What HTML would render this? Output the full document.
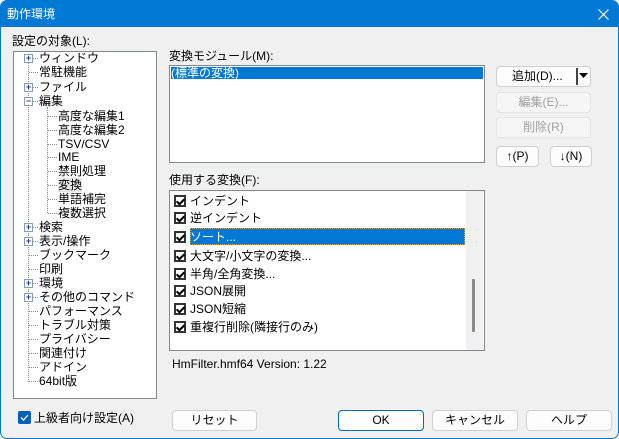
<!DOCTYPE html>
<html><head><meta charset="utf-8"><style>
*{box-sizing:border-box;margin:0;padding:0}
body{width:619px;height:439px;overflow:hidden;background:#fff;font-family:"Liberation Sans","Noto Sans CJK JP",sans-serif;font-size:12px;color:#000}
.win{position:absolute;left:0;top:0;width:619px;height:439px;background:#f0f0f0;border:1px solid #0078d4;border-radius:7px 7px 7px 7px;overflow:hidden}
.title{position:absolute;left:0;top:0;width:619px;height:26px;background:#0078d4;color:#fff;font-size:12px;line-height:26px;padding-left:6px}
.a{position:absolute;white-space:nowrap;line-height:14px}
.box{position:absolute;background:#fff;border:1px solid #828790}
.btn{position:absolute;background:#fdfdfd;border:1px solid #d0d0d0;border-radius:4px;text-align:center;line-height:18px;font-size:12px}
.dis{color:#a0a0a0;background:#f5f5f5;border-color:#e5e5e5}
.pm{position:absolute;width:9px;height:9px;border:1px solid #8a9ab0;background:#fff;font-size:9px;line-height:7px;text-align:center;color:#2040a0;font-weight:bold}
.vd{position:absolute;border-left:1px dotted #888;width:0}
.hd{position:absolute;border-top:1px dotted #888;height:0}
.cb{position:absolute;width:12px;height:12px;border:2px solid #333;background:#fff}
.cb::after{content:"";position:absolute;left:2px;top:0px;width:3px;height:6px;border:solid #000;border-width:0 2px 2px 0;transform:rotate(45deg)}
</style></head><body>
<div class="win">
<div class="title">動作環境</div>
<svg style="position:absolute;left:597px;top:8px" width="11" height="11"><path d="M0.5 0.5L10.5 10.5M10.5 0.5L0.5 10.5" stroke="#fff" stroke-width="1.2"/></svg>

<div class="a" style="left:11px;top:33px">設定の対象(L):</div>
<div class="box" style="left:12px;top:50px;width:144px;height:348px">
</div>
<div class="vd" style="left:27px;top:58px;height:323px"></div>
<div class="vd" style="left:46px;top:106px;height:106px"></div>
<div id="tree"></div>

<div class="a" style="left:168px;top:48px">変換モジュール(M):</div>
<div class="box" style="left:168px;top:64px;width:316px;height:98px"></div>
<div class="a" style="left:170px;top:66px;width:312px;height:12px;background:#0078d4;color:#fff;line-height:12px">(標準の変換)</div>

<div class="btn" style="left:495px;top:65px;width:95px;height:21px;text-align:left;padding-left:15px">追加(D)...</div>
<div style="position:absolute;left:575px;top:67px;width:2px;height:17px;background:#444"></div>
<svg style="position:absolute;left:578px;top:72px" width="9" height="6"><path d="M0 0H9L4.5 5Z" fill="#000"/></svg>
<div class="btn dis" style="left:495px;top:91px;width:95px;height:21px">編集(E)...</div>
<div class="btn dis" style="left:495px;top:116px;width:95px;height:21px">削除(R)</div>
<div class="btn" style="left:495px;top:145px;width:43px;height:21px">↑(P)</div>
<div class="btn" style="left:549px;top:145px;width:42px;height:21px">↓(N)</div>

<div class="a" style="left:168px;top:172px">使用する変換(F):</div>
<div class="box" style="left:168px;top:189px;width:316px;height:161px"></div>
<div style="position:absolute;left:465px;top:190px;width:17px;height:159px;background:#f0f0f0"></div>
<div style="position:absolute;left:471px;top:278px;width:3px;height:53px;background:#8a8a8a;border-radius:1px"></div>
<div style="position:absolute;left:189px;top:227px;width:275px;height:17px;background:#0078d4;outline:1px dotted #f0a040;outline-offset:-1px"></div>
<div id="list"></div>

<div class="a" style="left:171px;top:356px">HmFilter.hmf64 Version: 1.22</div>

<div style="position:absolute;left:17px;top:410px;width:13px;height:13px;background:#005fb8;border-radius:2px"></div>
<svg style="position:absolute;left:19px;top:413px" width="9" height="7"><path d="M1 3.5L3.5 6L8 1" stroke="#fff" stroke-width="1.3" fill="none"/></svg>
<div class="a" style="left:33px;top:410px">上級者向け設定(A)</div>

<div class="btn" style="left:171px;top:409px;width:85px;height:21px">リセット</div>
<div class="btn" style="left:337px;top:409px;width:86px;height:21px;border:1px solid #0067c0">OK</div>
<div class="btn" style="left:431px;top:409px;width:86px;height:21px">キャンセル</div>
<div class="btn" style="left:525px;top:409px;width:86px;height:21px">ヘルプ</div>
</div>
<script>
var t=[[0,'ウィンドウ',57,'+'],[0,'常駐機能',71],[0,'ファイル',86,'+'],[0,'編集',100,'-'],[1,'高度な編集1',115],[1,'高度な編集2',129],[1,'TSV/CSV',143],[1,'IME',156],[1,'禁則処理',170],[1,'変換',184],[1,'単語補完',198],[1,'複数選択',212],[0,'検索',226,'+'],[0,'表示/操作',240,'+'],[0,'ブックマーク',254],[0,'印刷',268],[0,'環境',282,'+'],[0,'その他のコマンド',296,'+'],[0,'パフォーマンス',310],[0,'トラブル対策',324],[0,'プライバシー',338],[0,'関連付け',352],[0,'アドイン',366],[0,'64bit版',380]];
var h='';
t.forEach(function(e){var lx=e[0]?47:28,tx=e[0]?57:38;
h+='<div class="hd" style="left:'+lx+'px;top:'+e[2]+'px;width:'+(tx-lx-1)+'px"></div>';
if(e[3])h+='<div class="pm" style="left:23px;top:'+(e[2]-4)+'px">'+(e[3]=='+'?'+':'−')+'</div>';
var bg=e[1]=='変換'?'background:#e8e8e8;':'';
h+='<div class="a" style="'+bg+'left:'+tx+'px;top:'+(e[2]-7)+'px">'+e[1]+'</div>';});
document.getElementById('tree').innerHTML=h;
var l=[['インデント',200],['逆インデント',217],['ソート...',236],['大文字/小文字の変換...',255],['半角/全角変換...',273],['JSON展開',290],['JSON短縮',308],['重複行削除(隣接行のみ)',326]];
h='';
l.forEach(function(e,i){h+='<div class="cb" style="left:173px;top:'+(e[1]-6)+'px"></div>';
h+='<div class="a" style="left:189px;top:'+(e[1]-7)+'px;'+(i==2?'color:#fff':'')+'">'+e[0]+'</div>';});
document.getElementById('list').innerHTML=h;
</script>
</body></html>
